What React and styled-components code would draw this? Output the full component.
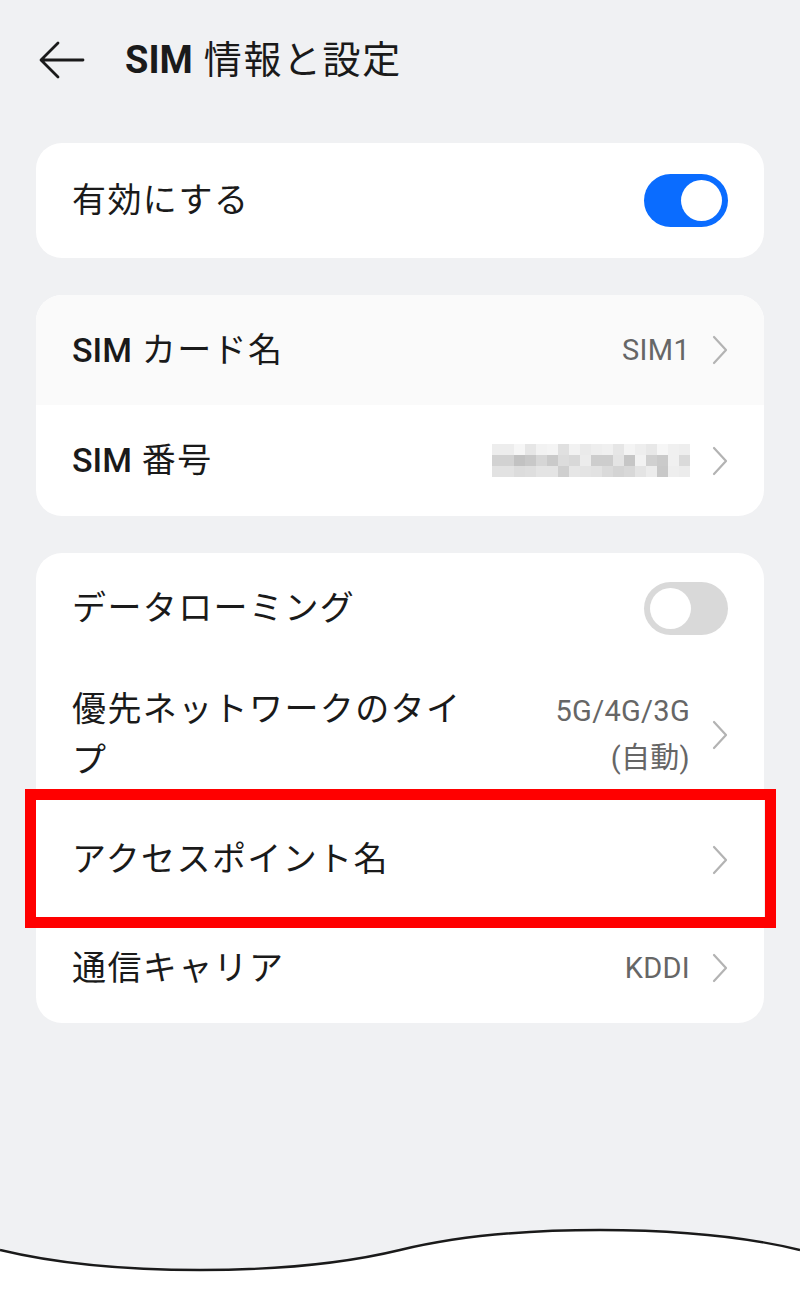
import React from 'react'
import styled, { createGlobalStyle } from 'styled-components'

const GlobalStyle = createGlobalStyle`
  html, body {
    margin: 0;
    padding: 0;
    background: #f0f1f3;
  }
  body {
    font-family: "Roboto", "Noto Sans CJK JP", sans-serif;
    color: #1a1a1a;
  }
`

const Page = styled.div`
  min-height: 1300px;
  display: flex;
  flex-direction: column;
  background: #f0f1f3;
`

const Header = styled.header`
  height: 120px;
  display: flex;
  align-items: center;
  gap: 40px;
  padding-left: 39px;
  box-sizing: border-box;
`

const BackButton = styled.button`
  border: none;
  background: none;
  padding: 0;
  display: flex;
  width: 46px;
  height: 38px;
  cursor: pointer;
`

const Title = styled.h1`
  margin: 0;
  font-size: 38px;
  font-weight: 400;
  line-height: 1;
  letter-spacing: 1.6px;
  color: #1a1a1a;
`

const Latin = styled.span`
  font-weight: ${p => p.$weight || 500};
  letter-spacing: 0;
`

const Cards = styled.main`
  display: flex;
  flex-direction: column;
  gap: 37px;
  padding: 23px 36px 0;
`

const Card = styled.section`
  background: #ffffff;
  border-radius: 26px;
`

const Row = styled.div`
  position: relative;
  display: flex;
  align-items: center;
  justify-content: space-between;
  gap: 20px;
  min-height: ${p => p.$height || 110}px;
  padding: 20px 36px;
  box-sizing: border-box;
  background: ${p => (p.$pressed ? '#fafafa' : 'transparent')};
  border-radius: ${p => p.$radius || '0'};

  & + &::before {
    content: '';
    position: absolute;
    top: 0;
    left: 36px;
    right: 36px;
    height: 1px;
    background: #e6e6e6;
  }
`

const Label = styled.span`
  font-size: 34px;
  font-weight: 400;
  line-height: 51px;
  letter-spacing: 1.4px;
  max-width: 400px;
  color: #1a1a1a;
`

const Trail = styled.div`
  display: flex;
  align-items: center;
  gap: 22px;
  flex-shrink: 0;
`

const Value = styled.span`
  font-size: 29px;
  line-height: 47px;
  letter-spacing: 0.3px;
  color: #666666;
  text-align: right;
`

const Switch = styled.div`
  width: 84px;
  height: 53px;
  border-radius: 27px;
  background: ${p => (p.$on ? '#0a6cff' : '#d9d9d9')};
  display: flex;
  align-items: center;
  justify-content: ${p => (p.$on ? 'flex-end' : 'flex-start')};
  padding: 0 6px;
  box-sizing: border-box;
`

const Knob = styled.span`
  width: 41px;
  height: 41px;
  border-radius: 50%;
  background: #ffffff;
`

const Blur = styled.div`
  display: grid;
  grid-template-columns: repeat(18, 11px);
  grid-auto-rows: 11px;
`

const Cell = styled.span`
  display: block;
`

const Highlight = styled.div`
  position: absolute;
  top: -17px;
  left: -11px;
  right: -12px;
  bottom: -15px;
  border: 11px solid #ff0000;
  pointer-events: none;
`

const Wave = styled.svg`
  display: block;
  margin-top: auto;
  width: 800px;
  height: 80px;
`

const blurRows = [
  ['ededed', 'ededed', 'f6f6f6', 'e6e6e6', 'f2f2f2', 'f4f4f4', 'e0e0e0', 'f2f2f2', 'eaeaea', 'eeeeee', 'f0f0f0', 'e6e6e6', 'f4f4f4', 'eeeeee', 'e8e8e8', 'f6f6f6', 'f0f0f0', 'eeeeee'],
  ['d2d2d2', 'd2d2d2', 'c2c2c2', 'c8c8c8', 'd6d6d6', 'cacaca', 'dcdcdc', 'd8d8d8', 'ececec', 'cdcdcd', 'cdcdcd', 'e4e4e4', 'c6c6c6', 'f2f2f2', 'd0d0d0', 'cacaca', 'f0f0f0', 'dadada'],
  ['e2e2e2', 'e2e2e2', 'dcdcdc', 'dedede', 'e4e4e4', 'e4e4e4', 'cfcfcf', 'e6e6e6', 'e4e4e4', 'e2e2e2', 'dadada', 'd4d4d4', 'd8d8d8', 'e4e4e4', 'ececec', 'c8c8c8', 'eeeeee', 'ececec'],
]

const Chevron = () => (
  <svg width="16" height="30" viewBox="0 0 16 30" fill="none">
    <polyline points="2,2 14,15 2,28" stroke="#b3b3b3" strokeWidth="2.2" strokeLinecap="round" strokeLinejoin="round" />
  </svg>
)

const BackArrow = () => (
  <svg width="46" height="38" viewBox="0 0 46 38" fill="none">
    <path d="M44 19H3M19 2L2 19l17 17" stroke="#1a1a1a" strokeWidth="2.8" strokeLinecap="round" strokeLinejoin="round" />
  </svg>
)

const Toggle = ({ on }) => (
  <Switch $on={on}>
    <Knob />
  </Switch>
)

const NavRow = ({ label, value, children, ...rest }) => (
  <Row {...rest}>
    <Label>{label}</Label>
    <Trail>
      {value}
      <Chevron />
    </Trail>
    {children}
  </Row>
)

const App = () => {
  return (
    <Page>
      <GlobalStyle />
      <Header>
        <BackButton aria-label="戻る">
          <BackArrow />
        </BackButton>
        <Title>
          <Latin $weight={700}>SIM</Latin> 情報と設定
        </Title>
      </Header>

      <Cards>
        <Card>
          <Row $height={115}>
            <Label>有効にする</Label>
            <Toggle on />
          </Row>
        </Card>

        <Card>
          <NavRow
            $pressed
            $radius="26px 26px 0 0"
            label={<><Latin>SIM</Latin> カード名</>}
            value={<Value>SIM1</Value>}
          />
          <NavRow
            $height={111}
            label={<><Latin>SIM</Latin> 番号</>}
            value={
              <Blur>
                {blurRows.flat().map((c, i) => (
                  <Cell key={i} style={{ background: '#' + c }} />
                ))}
              </Blur>
            }
          />
        </Card>

        <Card>
          <Row $height={111}>
            <Label>データローミング</Label>
            <Toggle />
          </Row>
          <NavRow
            $height={142}
            label="優先ネットワークのタイプ"
            value={
              <Value>
                5G/4G/3G
                <br />
                (自動)
              </Value>
            }
          />
          <NavRow $height={107} label="アクセスポイント名">
            <Highlight />
          </NavRow>
          <NavRow label="通信キャリア" value={<Value>KDDI</Value>} />
        </Card>
      </Cards>

      <Wave viewBox="0 0 800 80">
        <path d="M0 30C110 56.7 290 56.7 400 30C510 3.3 690 3.3 800 30L800 80L0 80Z" fill="#ffffff" />
        <path d="M0 30C110 56.7 290 56.7 400 30C510 3.3 690 3.3 800 30" fill="none" stroke="#1a1a1a" strokeWidth="2.4" />
      </Wave>
    </Page>
  )
}

export default App
